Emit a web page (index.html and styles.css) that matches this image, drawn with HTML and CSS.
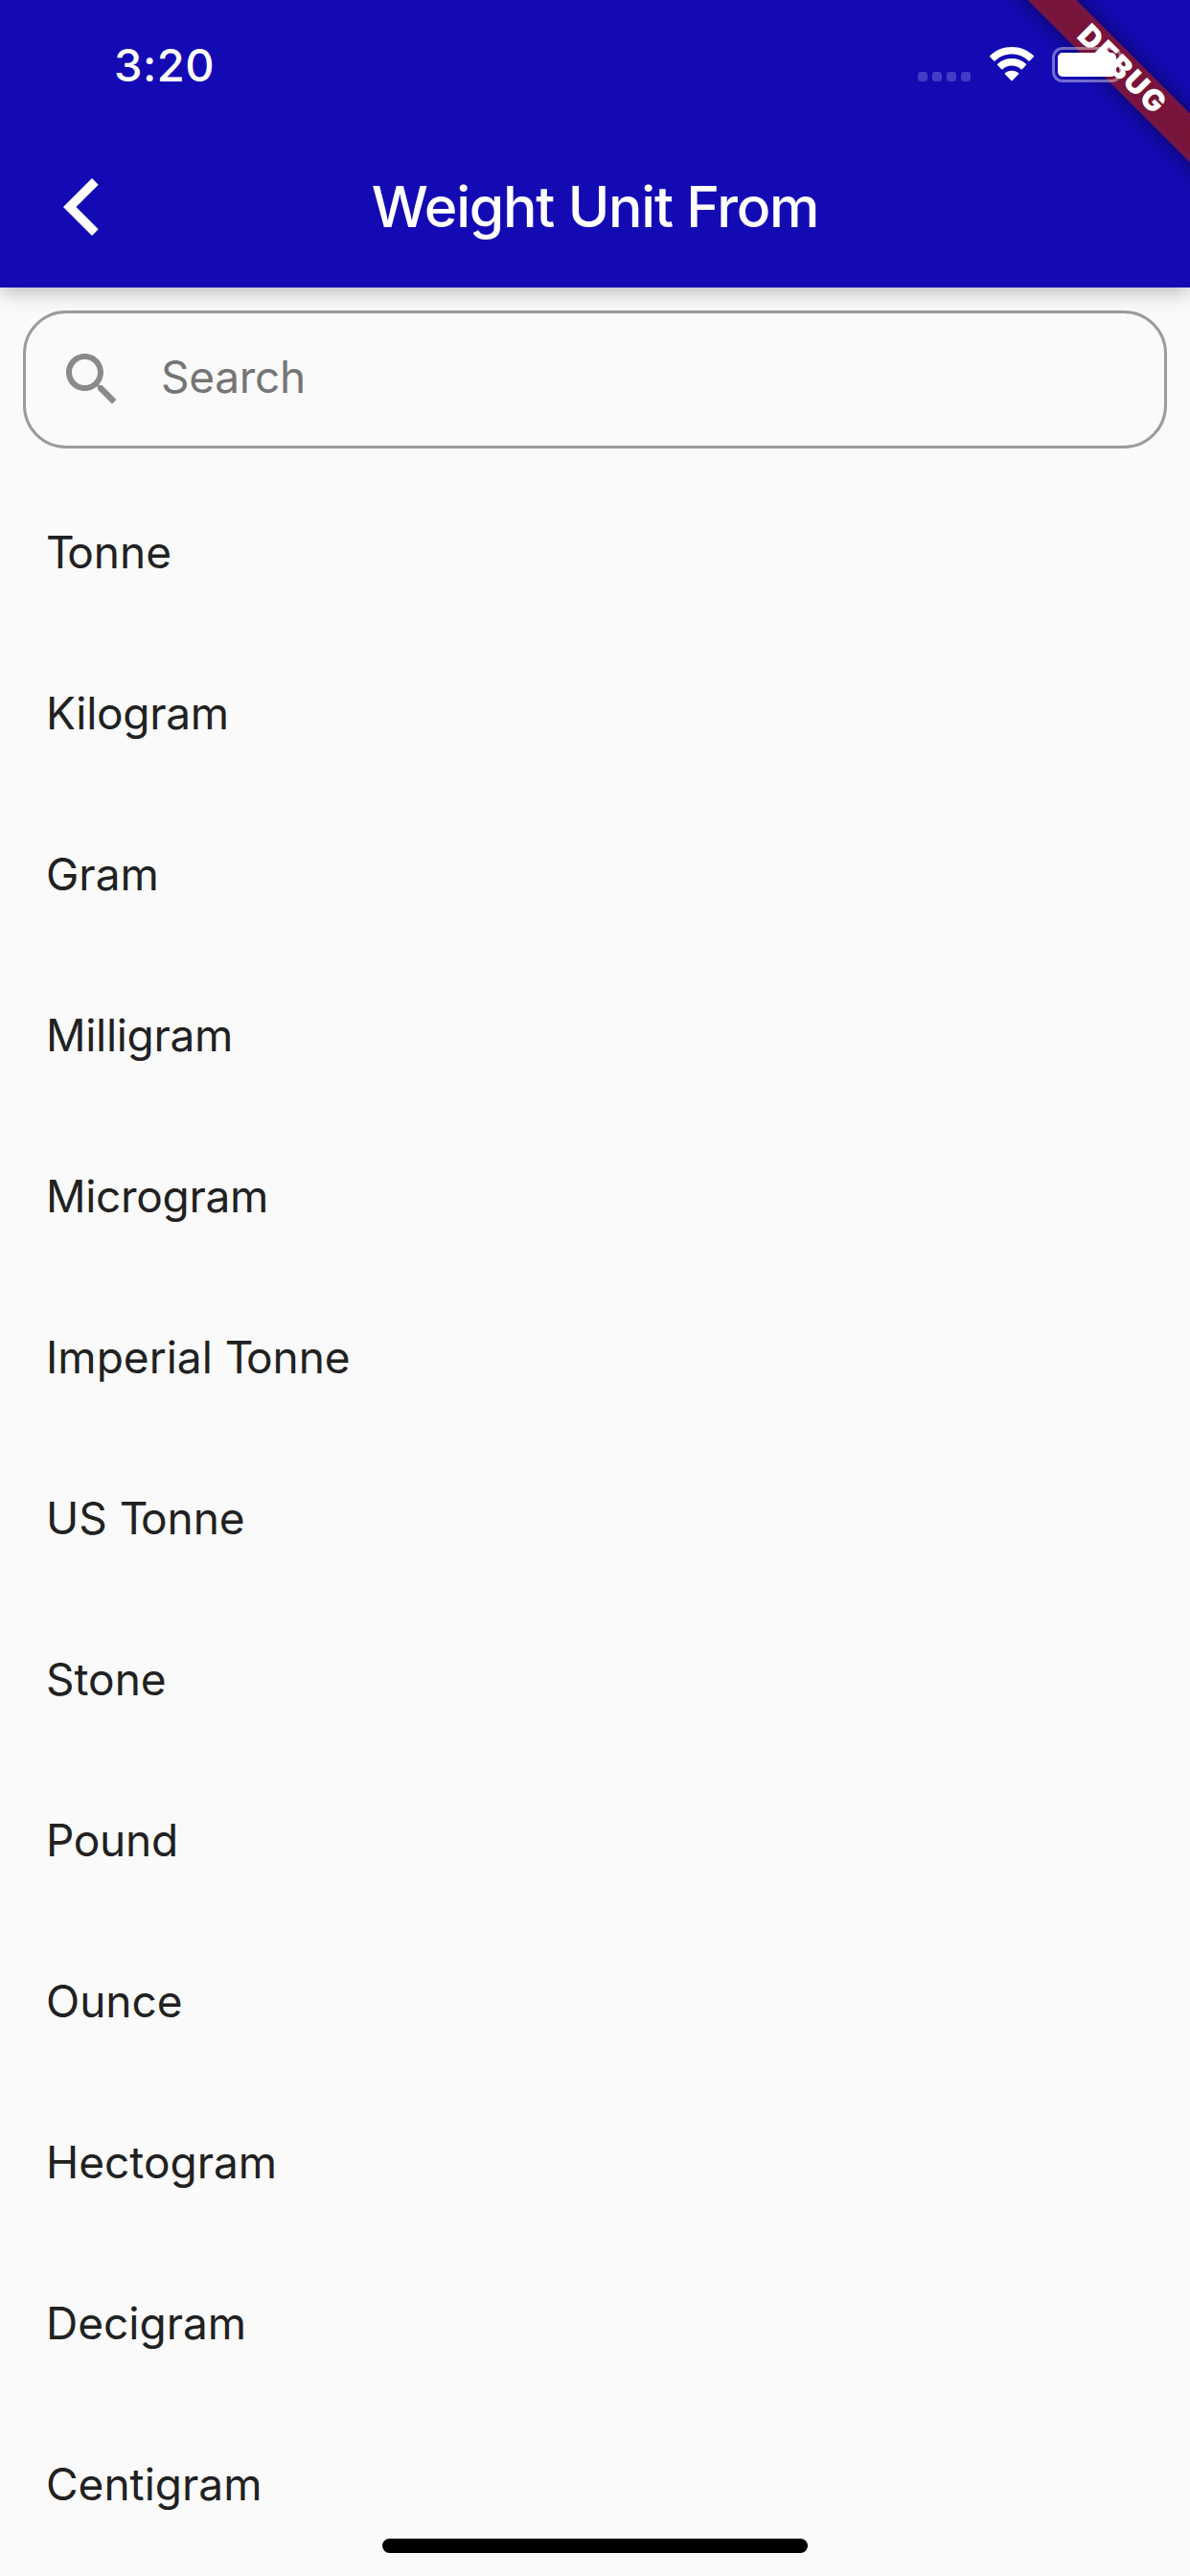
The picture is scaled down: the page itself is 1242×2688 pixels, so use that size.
FILE: index.html
```html
<!DOCTYPE html>
<html lang="en">
<head>
<meta charset="utf-8">
<title>Weight Unit From</title>
<link rel="stylesheet" href="styles.css">
</head>
<body>
<div class="screen">
  <header class="header">
    <div class="debug-banner"><span class="debug-text">DEBUG</span></div>
    <div class="status-bar">
      <span class="time">3:20</span>
      <div class="status-icons">
        <div class="cell"><i></i><i></i><i></i><i></i></div>
        <svg class="wifi" width="48" height="36" viewBox="0 0 48 36" fill="#fff">
          <path d="M24 7.500c6.600 0 12.800 2.600 17.400 7.100.4.4.9.4 1.300 0l4-4.200c.4-.4.4-1 0-1.400C40.600 3.200 32.500 0 24 0S7.400 3.200 1.300 9c-.4.4-.4 1 0 1.400l4 4.200c.4.4.9.4 1.300 0C11.200 10.100 17.400 7.500 24 7.500z"/>
          <path d="M24 19.600c3.600 0 6.900 1.300 9.500 3.700.4.4.9.4 1.300 0l4.100-4.200c.4-.4.4-1 0-1.400-4-3.700-9.300-5.700-14.900-5.700s-10.900 2-14.900 5.700c-.4.4-.4 1 0 1.400l4.100 4.200c.4.4.9.4 1.300 0 2.600-2.400 5.900-3.700 9.500-3.700z"/>
          <path d="M31 28.400c.4-.4.4-1 0-1.300-4-3.300-10-3.300-14 0-.4.300-.4.900 0 1.300l6.300 6.700c.4.400 1 .4 1.400 0z"/>
        </svg>
        <div class="battery"><div class="battery-fill"></div></div>
      </div>
    </div>
    <div class="app-bar">
      <svg class="back" width="37" height="60" viewBox="0 0 37 60" fill="#fff"><path d="M0 30 30 0l6.700 6.700L13.400 30l23.300 23.300L30 60z"/></svg>
      <h1 class="title">Weight Unit From</h1>
    </div>
  </header>
  <div class="search">
    <svg width="72" height="72" viewBox="0 0 24 24" fill="#8a8a8a"><path d="M15.500 14h-.79l-.28-.27C15.410 12.590 16 11.110 16 9.500 16 5.910 13.090 3 9.500 3S3 5.910 3 9.500 5.910 16 9.500 16c1.610 0 3.090-.59 4.230-1.570l.27.28v.79l5 4.990L20.490 19l-4.990-5zm-6 0C7.010 14 5 11.990 5 9.500S7.010 5 9.500 5 14 7.010 14 9.500 11.990 14 9.500 14z"/></svg>
    <span class="placeholder">Search</span>
  </div>
  <ul class="units">
    <li><span class="kern">T</span>onne</li>
    <li class="snug">Kilogram</li>
    <li>Gram</li>
    <li class="snug">Milligram</li>
    <li class="snug">Microgram</li>
    <li>Imperial <span class="kern">T</span>onne</li>
    <li>US <span class="kern">T</span>onne</li>
    <li>Stone</li>
    <li class="snug">Pound</li>
    <li>Ounce</li>
    <li>Hectogram</li>
    <li>Decigram</li>
    <li>Centigram</li>
  </ul>
  <div class="home-indicator"></div>
</div>
</body>
</html>
```
FILE: styles.css
```css
* { box-sizing: border-box; }

body {
  margin: 0;
  background: #fafafa;
  font-family: Inter, "Liberation Sans", sans-serif;
}

.screen {
  position: relative;
  width: 1242px;
  height: 2688px;
  overflow: hidden;
  display: flex;
  flex-direction: column;
  background: #fafafa;
  color: #212121;
}

.header {
  position: relative;
  flex: none;
  height: 300px;
  background: #140ab4;
  color: #fff;
  box-shadow: 0 4px 20px rgba(0, 0, 0, 0.28);
}

.status-bar {
  position: relative;
  height: 132px;
  padding: 0 71px 0 119px;
  display: flex;
  justify-content: space-between;
}

.time {
  margin-top: 38px;
  line-height: 60px;
  font-size: 47px;
  font-weight: 550;
  letter-spacing: 0.5px;
}

.status-icons {
  display: flex;
  align-items: flex-start;
  padding-top: 49px;
}

.cell {
  display: flex;
  gap: 5px;
  margin: 26px 19px 0 0;
}

.cell i {
  width: 10px;
  height: 10px;
  border-radius: 3px;
  background: rgba(255, 255, 255, 0.2);
}

.wifi { margin-right: 18px; }

.battery {
  position: relative;
  width: 73px;
  height: 37px;
  padding: 3px;
  border: 3px solid rgba(255, 255, 255, 0.4);
  border-radius: 11px;
}

.battery-fill {
  height: 25px;
  border-radius: 5px;
  background: #fff;
}

.battery::after {
  content: "";
  position: absolute;
  right: -10px;
  top: 9px;
  width: 4px;
  height: 13px;
  border-radius: 0 4px 4px 0;
  background: rgba(255, 255, 255, 0.4);
}

.app-bar {
  height: 168px;
  display: grid;
  grid-template-columns: 150px 1fr 150px;
  align-items: center;
}

.back { margin-left: 66px; }

.title {
  margin: 0;
  text-align: center;
  font-size: 59px;
  font-weight: 500;
  line-height: 72px;
  letter-spacing: -1.25px;
  white-space: nowrap;
}

/* Diagonal ribbon across the top right corner */
.debug-banner {
  position: absolute;
  left: 970px;
  top: 54px;
  width: 400px;
  height: 36px;
  transform: rotate(45deg);
}

.debug-banner::before,
.debug-banner::after {
  content: "";
  position: absolute;
  inset: 0;
}

.debug-banner::before {
  background: rgba(0, 0, 0, 0.5);
  filter: blur(11px);
}

.debug-banner::after { background: rgba(183, 28, 28, 0.627); }

.debug-text {
  position: absolute;
  inset: 0;
  z-index: 1;
  text-align: center;
  font-size: 31px;
  font-weight: 900;
  line-height: 34px;
  letter-spacing: 1.8px;
  text-indent: 3px;
}

.search {
  flex: none;
  height: 144px;
  margin: 24px;
  padding-left: 33px;
  display: flex;
  align-items: center;
  border: 3px solid #9b9b9b;
  border-radius: 45px;
}

.placeholder {
  margin: 0 0 6px 36px;
  color: #757575;
  font-size: 46px;
  line-height: 60px;
  letter-spacing: -0.3px;
}

.units {
  margin: 0;
  padding: 0;
  list-style: none;
}

.units li {
  height: 168px;
  padding-left: 48px;
  font-size: 46px;
  line-height: 168px;
}

.units .snug { letter-spacing: -0.3px; }

.kern { letter-spacing: -7.5px; }

.home-indicator {
  position: absolute;
  left: 399px;
  top: 2649px;
  width: 444px;
  height: 15px;
  border-radius: 8px;
  background: #000;
}
```
